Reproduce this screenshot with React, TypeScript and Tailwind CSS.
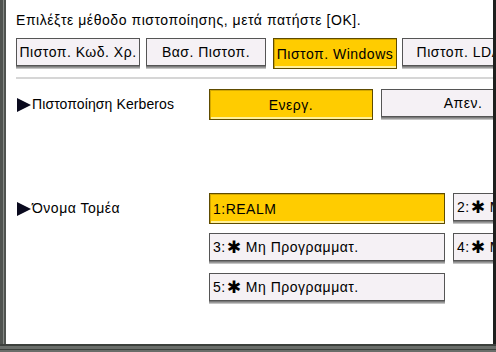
import React from "react";

const font = { fontFamily: '"Liberation Sans", Arial, sans-serif' };

function GrayBtn({ className = "", children }: { className?: string; children: React.ReactNode }) {
  return (
    <div
      className={`h-[28px] bg-[#f5f1f5] border border-[#555555] shadow-[0_1px_0_#7a7a7a,0_2px_0_#9a9a9a,0_3px_0_#c4c4c4] flex items-center text-[14px] tracking-[0.5px] text-black leading-none whitespace-nowrap overflow-hidden ${className}`}
    >
      <span className="flex items-center">{children}</span>
    </div>
  );
}

function YellowBtn({ className = "", children }: { className?: string; children: React.ReactNode }) {
  return (
    <div
      className={`h-[31px] bg-[#ffcc00] border border-[#5e4b00] shadow-[inset_1px_1px_0_#d4a800,inset_0_-2px_0_#fff09a] flex items-center text-[14px] tracking-[0.5px] text-black leading-none whitespace-nowrap overflow-hidden ${className}`}
    >
      <span>{children}</span>
    </div>
  );
}

function Tri() {
  return (
    <svg width="14" height="14" viewBox="0 0 14 14" className="shrink-0">
      <polygon points="0,0 14,7 0,14" fill="#0a0a1e" />
    </svg>
  );
}

function Slot({ n }: { n: number }) {
  return (
    <span className="flex items-center whitespace-pre">
      <span>{n}:</span>
      <span className="text-[17px] font-bold ml-[1px] leading-none" style={{ fontFamily: '"DejaVu Sans", sans-serif' }}>
        ✱
      </span>
      <span> Μη Προγραμματ.</span>
    </span>
  );
}

export default function App() {
  return (
    <div className="w-[496px] h-[352px] bg-white flex flex-col overflow-hidden" style={font}>
      <div className="flex flex-1 min-h-0">
        {/* left frame */}
        <div className="w-[6px] flex shrink-0">
          <div className="w-[3px] bg-[#4f534f]" />
          <div className="w-[1px] bg-[#858985]" />
          <div className="w-[2px] bg-[#4f534f]" />
        </div>
        {/* content */}
        <div className="flex-1 min-w-0 flex flex-col">
          <div className="pl-[10px] pt-[12px] leading-[16px] text-[14px] tracking-[0.55px] text-black whitespace-nowrap">
            Επιλέξτε μέθοδο πιστοποίησης, μετά πατήστε [OK].
          </div>
          <div className="flex mt-[10px] pl-[10px] h-[31px] items-start">
            <GrayBtn className="w-[124px] justify-center shrink-0">Πιστοπ. Κωδ. Χρ.</GrayBtn>
            <GrayBtn className="w-[120px] ml-[6px] justify-center shrink-0">Βασ. Πιστοπ.</GrayBtn>
            <YellowBtn className="w-[124px] ml-[7px] justify-center shrink-0">Πιστοπ. Windows</YellowBtn>
            <GrayBtn className="w-[124px] ml-[5px] justify-center shrink-0">Πιστοπ. LDAP</GrayBtn>
          </div>
          <div className="ml-[10px] mt-[8px] h-[2px] bg-[#d6d6d6]" />
          {/* Kerberos */}
          <div className="flex items-center mt-[10px] h-[31px] pl-[11px]">
            <div className="w-[192px] flex items-center text-[14px] tracking-[0.1px] text-black whitespace-nowrap shrink-0">
              <Tri />
              <span className="ml-[1px]">Πιστοποίηση Kerberos</span>
            </div>
            <YellowBtn className="w-[164px] justify-center shrink-0">Ενεργ.</YellowBtn>
            <div className="ml-[8px] self-start">
              <GrayBtn className="w-[164px] justify-center shrink-0">Απεν.</GrayBtn>
            </div>
          </div>
          {/* Domain */}
          <div className="flex mt-[73px] pl-[11px]">
            <div className="w-[192px] h-[31px] flex items-center text-[14px] tracking-[0.5px] text-black whitespace-nowrap shrink-0">
              <Tri />
              <span className="ml-[1px]">Όνομα Τομέα</span>
            </div>
            <div className="grid grid-cols-[236px_236px] gap-x-[8px] gap-y-[9px] auto-rows-[31px]">
              <YellowBtn className="pl-[3px]">1:REALM</YellowBtn>
              <GrayBtn className="pl-[3px]">
                <Slot n={2} />
              </GrayBtn>
              <GrayBtn className="pl-[3px]">
                <Slot n={3} />
              </GrayBtn>
              <GrayBtn className="pl-[3px]">
                <Slot n={4} />
              </GrayBtn>
              <GrayBtn className="pl-[3px]">
                <Slot n={5} />
              </GrayBtn>
            </div>
          </div>
        </div>
        {/* right frame */}
        <div className="w-[3px] bg-[#1e201e] shrink-0" />
      </div>
      {/* bottom frame */}
      <div className="h-[8px] flex flex-col shrink-0">
        <div className="h-[2px] bg-[#3c403c]" />
        <div className="h-[3px] bg-[#6a6e6a]" />
        <div className="h-[1px] bg-[#3c403c]" />
        <div className="h-[2px] bg-[#6a6e6a]" />
      </div>
    </div>
  );
}
